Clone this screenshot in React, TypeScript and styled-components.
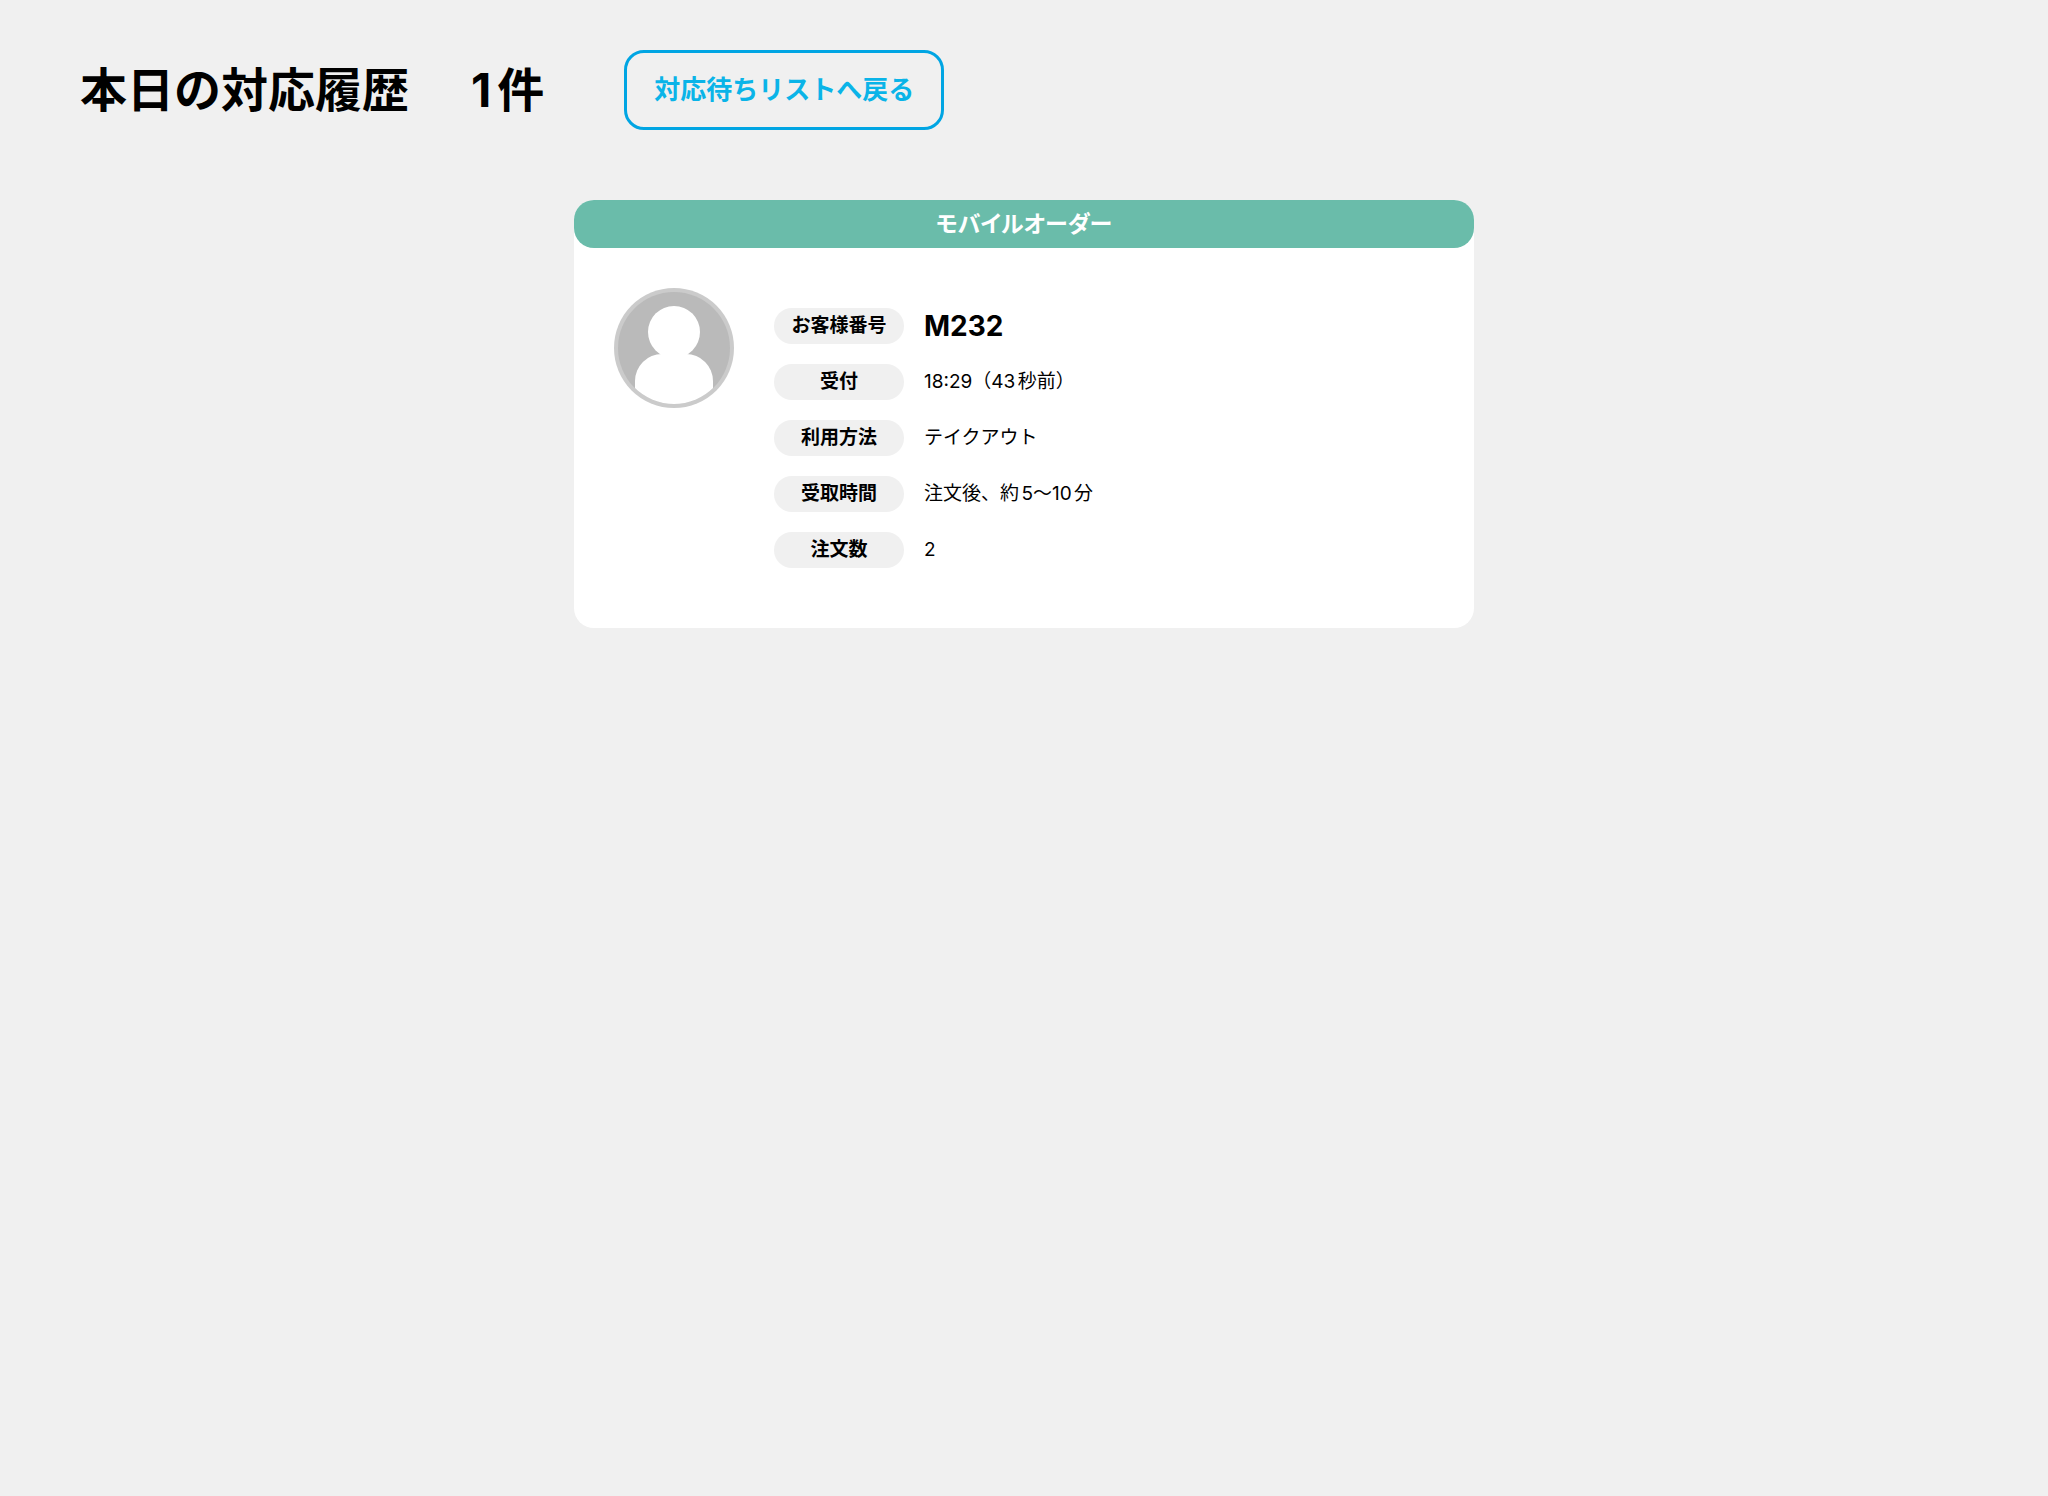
import React from "react";
import styled, { createGlobalStyle } from "styled-components";

const GlobalStyle = createGlobalStyle`
  *, *::before, *::after { box-sizing: border-box; }
  body {
    margin: 0;
    background: #f0f0f0;
    color: #000;
    font-family: Inter, "Noto Sans CJK JP", sans-serif;
    text-autospace: normal;
  }
`;

const Page = styled.div`
  padding: 50px 80px;
`;

const PageHeader = styled.header`
  display: flex;
  align-items: center;
  gap: 80px;
  margin-bottom: 70px;
`;

const Title = styled.h1`
  display: flex;
  gap: 62px;
  margin: 0;
  font-size: 47px;
  line-height: 60px;
  font-weight: 700;
  white-space: nowrap;
`;

const BackButton = styled.button`
  padding: 0 27px;
  border: 3px solid #00a5e3;
  border-radius: 20px;
  background: transparent;
  color: #0ab4e8;
  font-family: inherit;
  font-size: 26px;
  line-height: 74px;
  font-weight: 600;
  white-space: nowrap;
  cursor: pointer;
`;

const Card = styled.article`
  width: 100%;
  max-width: 900px;
  margin: 0 auto;
  border-radius: 20px;
  background: #fff;
`;

const CardHeading = styled.h2`
  margin: 0;
  border-radius: 20px;
  background: #6abcaa;
  color: #fff;
  font-size: 23px;
  line-height: 48px;
  font-weight: 600;
  font-feature-settings: "palt";
  text-align: center;
`;

const CardBody = styled.div`
  display: flex;
  align-items: flex-start;
  gap: 40px;
  padding: 40px;
`;

const Avatar = styled.svg`
  flex: none;
  width: 120px;
  height: 120px;
`;

const Details = styled.dl`
  display: flex;
  flex-direction: column;
  gap: 20px;
  margin: 0;
  padding: 20px 0;
`;

const DetailRow = styled.div`
  display: flex;
  align-items: center;
  gap: 20px;
`;

const Label = styled.dt`
  width: 130px;
  border-radius: 20px;
  background: #f0f0f0;
  font-size: 19px;
  line-height: 36px;
  font-weight: 600;
  text-align: center;
`;

const Value = styled.dd<{ $strong?: boolean }>`
  margin: 0;
  font-size: ${(p) => (p.$strong ? 28 : 19)}px;
  line-height: 36px;
  font-weight: ${(p) => (p.$strong ? 700 : 400)};
`;

const details = [
  { label: "お客様番号", value: "M232", strong: true },
  { label: "受付", value: "18:29（43秒前）" },
  { label: "利用方法", value: "テイクアウト" },
  { label: "受取時間", value: "注文後、約5〜10分" },
  { label: "注文数", value: "2" },
];

function CustomerAvatar() {
  return (
    <Avatar viewBox="0 0 120 120" aria-hidden="true">
      <defs>
        <clipPath id="avatar-clip">
          <circle cx="60" cy="60" r="56" />
        </clipPath>
      </defs>
      <circle cx="60" cy="60" r="60" fill="#cbcbcb" />
      <g clipPath="url(#avatar-clip)">
        <rect width="120" height="120" fill="#bababa" />
        <circle cx="60" cy="44" r="26" fill="#fff" />
        <rect x="21" y="66" width="78" height="70" rx="27" fill="#fff" />
      </g>
    </Avatar>
  );
}

export default function App() {
  return (
    <>
      <GlobalStyle />
      <Page>
        <PageHeader>
          <Title>
            <span>本日の対応履歴</span>
            <span>1件</span>
          </Title>
          <BackButton type="button">対応待ちリストへ戻る</BackButton>
        </PageHeader>
        <main>
          <Card>
            <CardHeading>モバイルオーダー</CardHeading>
            <CardBody>
              <CustomerAvatar />
              <Details>
                {details.map((d) => (
                  <DetailRow key={d.label}>
                    <Label>{d.label}</Label>
                    <Value $strong={d.strong}>{d.value}</Value>
                  </DetailRow>
                ))}
              </Details>
            </CardBody>
          </Card>
        </main>
      </Page>
    </>
  );
}
